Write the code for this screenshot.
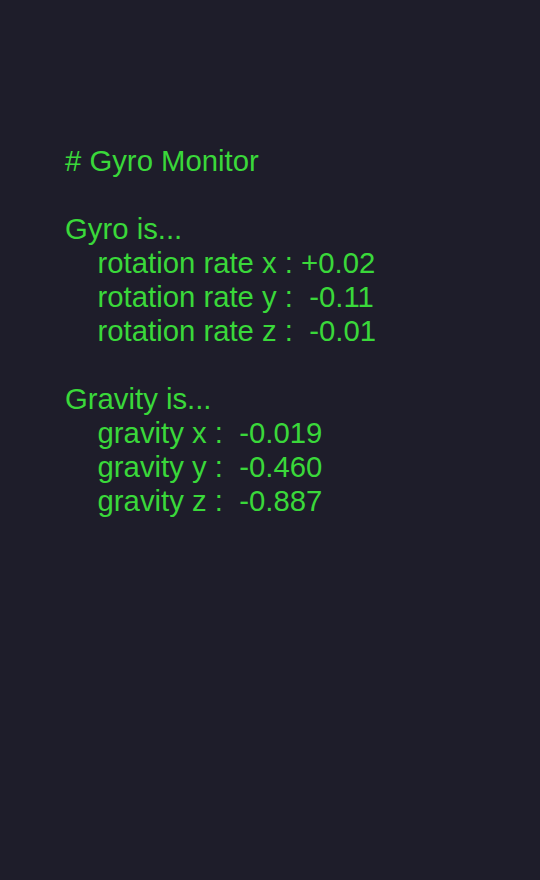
export default function App() {
  const text = `# Gyro Monitor

Gyro is...
    rotation rate x : +0.02
    rotation rate y :  -0.11
    rotation rate z :  -0.01

Gravity is...
    gravity x :  -0.019
    gravity y :  -0.460
    gravity z :  -0.887`;
  return (
    <div className="w-[540px] h-[880px] bg-[#1e1d2a] pl-[65px] pt-[144px]">
      <div
        className="whitespace-pre text-[29.3px] leading-[34px] text-[#3ad83a]"
        style={{ fontFamily: '"Liberation Sans", Arial, sans-serif' }}
      >
        {text}
      </div>
    </div>
  );
}
